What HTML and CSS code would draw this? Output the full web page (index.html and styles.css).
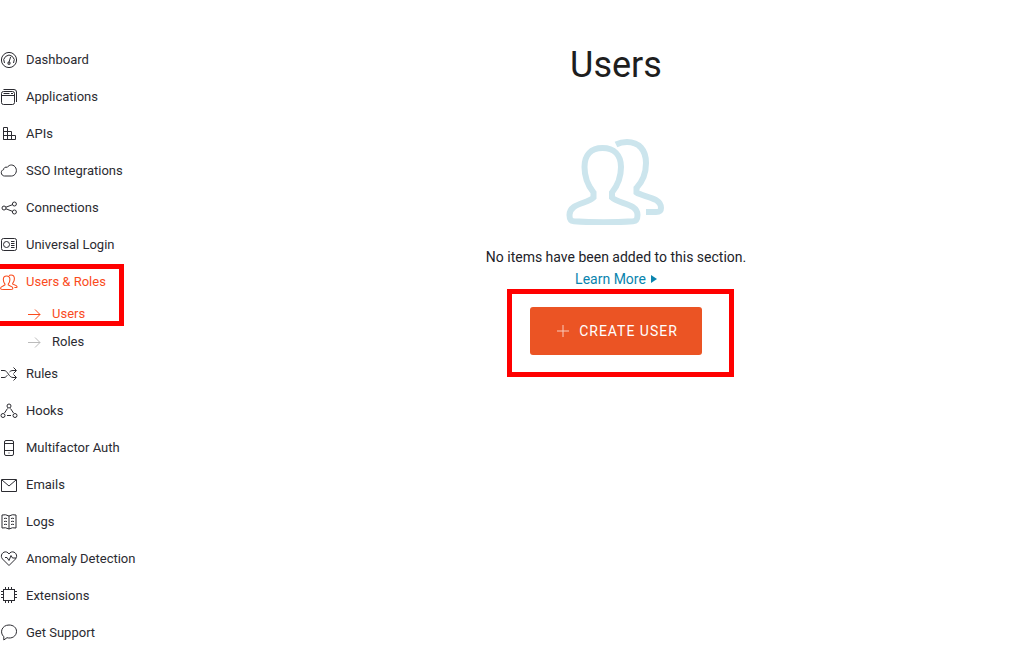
FILE: index.html
```
<!DOCTYPE html>
<html lang="en">
<head>
<meta charset="utf-8">
<title>Users</title>
<link rel="stylesheet" href="styles.css">
</head>
<body>
<div class="layout">
<nav class="sidebar" aria-label="Main">
<ul class="menu">
<li><a class="item" href="#"><svg class="icon" viewBox="0 0 18 18"><circle cx="9" cy="9" r="7.600"/><path d="M4.500 12A5.200 5.200 0 1 1 13.500 12M9 11l1.600-5M8 11.200h2v2h-2z"/></svg>Dashboard</a></li>
<li><a class="item" href="#"><svg class="icon" viewBox="0 0 18 18"><rect x="1.500" y="3.500" width="13" height="13" rx="2"/><path d="M1.500 7.500h13M3.500 5.500h6M11 5.500h2M3.500 1.500h10.500q2.500 0 2.500 2.500v10"/></svg>Applications</a></li>
<li><a class="item" href="#"><svg class="icon" viewBox="0 0 18 18"><path d="M3.500 2.500h4v12h-4zM3.500 6.500h8v8M3.500 10.500h12v4h-12M11.500 10.500v4"/></svg>APIs</a></li>
<li><a class="item" href="#"><svg class="icon" viewBox="0 0 18 18"><path d="M4.500 14H11.500A5 5.500 0 1 0 7.300 5.300C5.500 4.600 3.600 5.700 3.600 7.600 2 8 1.300 9.300 1.300 10.700 1.300 12.500 2.700 14 4.500 14z"/></svg>SSO Integrations</a></li>
<li><a class="item" href="#"><svg class="icon" viewBox="0 0 18 18"><circle cx="4" cy="9" r="2"/><circle cx="14.400" cy="5" r="2"/><circle cx="14.400" cy="13" r="2"/><path d="M6 8.200l6.400-2.500M6 9.800l6.400 2.500"/></svg>Connections</a></li>
<li><a class="item" href="#"><svg class="icon" viewBox="0 0 18 18"><rect x="1.500" y="2.500" width="15" height="12" rx="2"/><circle cx="6.500" cy="8.500" r="3"/><path d="M11 5.500h3.500M11 7.500h3.500M11 9.500h3.500M11 11.500h3.500"/></svg>Universal Login</a></li>
<li>
<a class="item active" href="#"><svg class="icon" viewBox="0 0 100 88"><use href="#people"/></svg>Users &amp; Roles</a>
<ul class="submenu">
<li><a class="item active" href="#" aria-current="page"><svg class="arrow" viewBox="0 0 13 11"><path d="M0 5.500h12M7 .500l5 5-5 5"/></svg>Users</a></li>
<li><a class="item" href="#"><svg class="arrow muted" viewBox="0 0 13 11"><path d="M0 5.500h12M7 .500l5 5-5 5"/></svg>Roles</a></li>
</ul>
<span class="mark mark-menu"></span>
</li>
<li><a class="item" href="#"><svg class="icon" viewBox="0 0 18 18"><path d="M1 5.500h3c4 0 4.500 7 9 7h3M1 12.500h3c1.500 0 2.500-1 3.300-2.200M9.500 7C10.400 6 11.500 5.500 13 5.500h3M13.500 2.500l3 3-3 3M13.500 9.500l3 3-3 3"/></svg>Rules</a></li>
<li><a class="item" href="#"><svg class="icon" viewBox="0 0 18 18"><circle cx="9" cy="4" r="2"/><circle cx="3" cy="13.500" r="2"/><circle cx="15" cy="13.500" r="2"/><path d="M7.500 6.500l-3 4.500M10.500 6.500l3 4.500M7 13.500h4"/></svg>Hooks</a></li>
<li><a class="item" href="#"><svg class="icon" viewBox="0 0 18 18"><rect x="4.500" y="1.500" width="9" height="15" rx="1.500"/><path d="M4.500 4.500h9M4.500 11.500h9M8.500 14h1"/></svg>Multifactor Auth</a></li>
<li><a class="item" href="#"><svg class="icon" viewBox="0 0 18 18"><path d="M1.500 3.500h15v12h-15zM2 4l7 6 7-6"/></svg>Emails</a></li>
<li><a class="item" href="#"><svg class="icon" viewBox="0 0 18 18"><path d="M9 3Q5.500 1 2 2v13q3.500-1 7 1 3.500-2 7-1V2q-3.500-1-7 1zM9 3v13M4 5.500q1.500-.500 3 0M4 8.500q1.500-.500 3 0M4 11.500q1.500-.500 3 0M11 5.500q1.500-.500 3 0M11 8.500q1.500-.500 3 0M11 11.500q1.500-.500 3 0"/></svg>Logs</a></li>
<li><a class="item" href="#"><svg class="icon" viewBox="0 0 18 18"><path d="M9 15.500L2.500 9C-.500 5.500 3 1 6.500 2Q8.200 2.500 9 4 9.800 2.500 11.500 2c3.500-1 7 3.500 4 7zM5 7.500h2l2 3 2-5 1.500 2.500H16"/></svg>Anomaly Detection</a></li>
<li><a class="item" href="#"><svg class="icon" viewBox="0 0 18 18"><rect x="3.500" y="2.500" width="11" height="11"/><path d="M5.500 0v2M8.500 0v2M11.500 0v2M5.500 14v2M8.500 14v2M11.500 14v2M1 4.500h2M1 7.500h2M1 10.500h2M15 4.500h2M15 7.500h2M15 10.500h2"/></svg>Extensions</a></li>
<li><a class="item" href="#"><svg class="icon" viewBox="0 0 18 18"><path d="M3.800 12.700C-.800 8.500 2 1 9 1c4.500 0 7.500 2.800 7.500 6.300 0 5-4.800 7.700-9.500 6.400L3.800 16z"/></svg>Get Support</a></li>
</ul>
</nav>
<main class="content">
<h1 class="title">Users</h1>
<svg class="people" viewBox="0 0 100 88" aria-hidden="true">
<g id="people">
<path d="M27.500 55.500C21.500 48 18.500 41 18.500 30 18.500 18 25 11 36.500 11S55 18 55 30C55 41 52 48 46 55.500v5C52 67 71.500 66 71.500 78 71.500 83 70 84 67 84.300 50 85.500 25 85.500 8 84.300 5 84 3.500 83 3.500 78 3.500 66 21.500 67 27.500 60.500z"/>
<path d="M50 7.500Q55 5 61 5C73 5 80 13 80 26 80 37 77 44 70.500 51v4.500C77 60 95 60 95 71 95 74 93 75 90 75H80"/>
</g>
</svg>
<p class="message">No items have been added to this section.</p>
<a class="learn" href="#">Learn More<svg class="triangle" viewBox="0 0 6 8"><path d="M0 0l6 4-6 4z"/></svg></a>
<div class="action">
<button class="create" type="button"><svg class="plus" viewBox="0 0 12 12"><path d="M6 0v12M0 6h12"/></svg>CREATE USER</button>
<span class="mark mark-action"></span>
</div>
</main>
</div>
</body>
</html>
```
FILE: styles.css
```
* { box-sizing: border-box; }
body {
  margin: 0;
  background: #fff;
  color: #222228;
  font-family: Roboto, "Liberation Sans", sans-serif;
  font-size: 14px;
}
a { text-decoration: none; }
ul { list-style: none; margin: 0; padding: 0; }
svg { flex: none; fill: none; stroke: currentColor; }
.layout { display: flex; }
.sidebar { flex: 0 0 198px; padding-top: 50px; }
.menu { display: flex; flex-direction: column; gap: 17px; }
.menu > li { position: relative; }
.item {
  display: flex;
  align-items: center;
  gap: 8px;
  color: #2b2b31;
  font-size: 13px;
  line-height: 20px;
}
.icon { width: 18px; height: 18px; }
.item.active { color: #fa4b1c; }
.active .icon { stroke-width: 6; }
.submenu { display: flex; flex-direction: column; gap: 8px; padding: 12px 0 0 28px; margin-bottom: -5px; }
.submenu .item { gap: 11px; }
.arrow { width: 13px; height: 11px; }
.arrow.muted { color: #bbb; }
.mark { position: absolute; border: 5px solid #f00; pointer-events: none; }
.mark-menu { top: -8px; left: -5px; width: 129px; height: 62px; }
.content {
  flex: 1;
  display: flex;
  flex-direction: column;
  align-items: center;
  padding-top: 43px;
}
.title { margin: 0; color: #1e1e1e; font-size: 36px; font-weight: 400; line-height: 44px; }
.people { width: 100px; height: 88px; margin-top: 50px; color: #cce5ed; stroke-width: 6; }
.message { margin: 21px 0 0; line-height: 22px; }
.learn { display: flex; align-items: center; gap: 5px; color: #0a84ae; line-height: 22px; }
.triangle { width: 6px; height: 8px; fill: currentColor; stroke: none; }
.action { position: relative; margin-top: 17px; }
.create {
  display: flex;
  align-items: center;
  gap: 10px;
  height: 48px;
  padding: 0 24px 0 27px;
  border: 0;
  border-radius: 3px;
  background: #eb5424;
  color: #fff;
  font-family: inherit;
  font-size: 14px;
  letter-spacing: 1px;
}
.plus { width: 12px; height: 12px; opacity: 0.7; }
.mark-action { top: -18px; right: -32px; bottom: -22px; left: -23px; }
```
